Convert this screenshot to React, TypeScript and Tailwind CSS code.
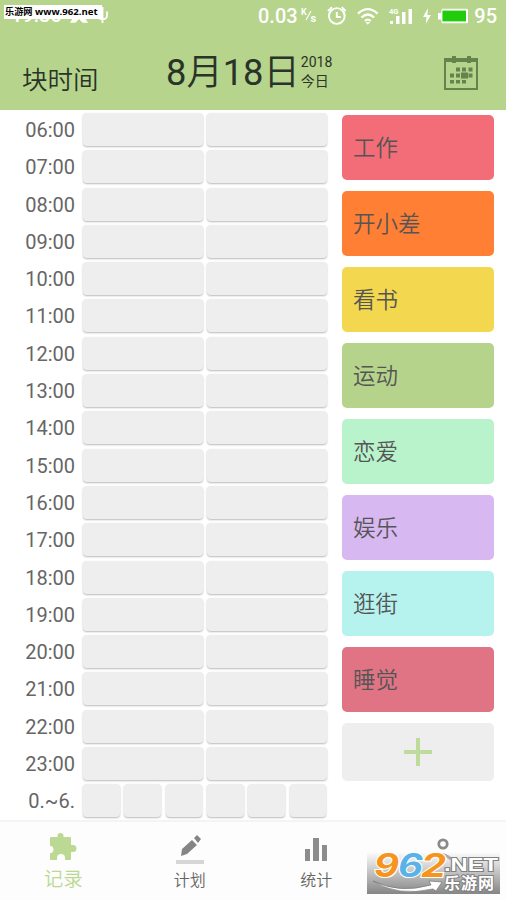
import { clsx } from 'clsx';

interface Category {
  name: string;
  color: string;
}

const hours = Array.from({ length: 18 }, (_, i) => `${String(i + 6).padStart(2, '0')}:00`);

const categories: Category[] = [
  { name: '工作', color: 'bg-[#f36d78]' },
  { name: '开小差', color: 'bg-[#ff7f35]' },
  { name: '看书', color: 'bg-[#f3d74f]' },
  { name: '运动', color: 'bg-[#b5d38a]' },
  { name: '恋爱', color: 'bg-[#b8f3cb]' },
  { name: '娱乐', color: 'bg-[#d7b8f0]' },
  { name: '逛街', color: 'bg-[#b6f3ee]' },
  { name: '睡觉', color: 'bg-[#e17484]' },
];

function StatusBar() {
  return (
    <div className="relative h-8 text-white">
      {/* Clock, half hidden by the site label */}
      <div className="absolute left-[11px] top-[3px] flex items-center text-[20px] leading-6 font-medium">
        <span>19:30</span>
        <svg className="ml-2 h-[18px] w-[18px]" viewBox="0 0 20 19" fill="currentColor">
          <path d="M10 2 20 18h-6l-4-4-4 4H0z" />
        </svg>
        <svg className="ml-[8px] h-[18px] w-[13px]" viewBox="0 0 14 20" fill="none" stroke="currentColor" strokeWidth="2">
          <path d="M7 1v18M2 6v5q0 3 5 4 5-1 5-4V6" />
        </svg>
      </div>
      <div className="absolute left-[4px] top-[5px] h-[14px] w-[98px] whitespace-nowrap bg-white pl-px font-['Open_Sans','Noto_Sans_CJK_SC',sans-serif] text-[9.2px] leading-[14px] font-bold text-black">
        乐游网 <span className="text-[9.6px]">www.962.net</span>
      </div>

      <div className="flex h-8 items-center pl-[258px] pr-[9px]">
        <span className="w-[40px] text-[20px] leading-none font-medium">0.03</span>
        <svg className="ml-[3px] h-[16px] w-[18px] overflow-visible" viewBox="0 0 18 16" fill="currentColor">
          <text x="0" y="7" fontSize="9" fontWeight="700">K</text>
          <path d="M5 12 10 3" stroke="currentColor" strokeWidth="1.2" />
          <text x="9.500" y="14" fontSize="11" fontWeight="700">s</text>
        </svg>
        <svg className="ml-[8px] h-[20px] w-[20px]" viewBox="0 0 20 20" fill="none" stroke="currentColor" strokeWidth="2">
          <circle cx="10" cy="10" r="8" />
          <path d="M1 5l4-4M19 5l-4-4M10 6v5h4" />
        </svg>
        <svg className="ml-[11px] h-[18px] w-[22px]" viewBox="0 0 22 18" fill="none" stroke="currentColor" strokeWidth="2.3">
          <path d="M1 6.5Q11-2.5 21 6.5M4.5 10.5q6.5-6 13 0M8 14q3-2.5 6 0" />
          <path d="m8.5 15 2.5 3 2.5-3z" fill="currentColor" stroke="none" />
        </svg>
        <svg className="ml-[10px] h-[18px] w-[24px] overflow-visible" viewBox="0 0 24 18" fill="currentColor">
          <text x="0" y="6.5" fontSize="7.5" fontWeight="700">4G</text>
          <path d="M1 14h3v3H1zM7 9h3.500v8H7zM13 5h3.500v12H13zM19.500 2H23v15h-3.500z" />
        </svg>
        <svg className="ml-[10px] h-[16px] w-[8px]" viewBox="0 0 8 16" fill="currentColor">
          <path d="M5 0 0 9h3.500L3 16l5-9H4.500z" />
        </svg>
        <svg className="ml-[6px] h-[16px] w-[32px]" viewBox="0 0 32 16">
          <path d="M5 .5h25a1.500 1.500 0 0 1 1.500 1.500v12a1.500 1.500 0 0 1-1.500 1.500H5l-1-4H1V5h3z" fill="#fff" />
          <path d="M5.500 2.500h24v11h-24z" fill="#20cc0c" />
        </svg>
        <span className="ml-[6px] text-[20px] leading-none font-medium">95</span>
      </div>
    </div>
  );
}

function CalendarIcon() {
  return (
    <svg className="h-[36px] w-[36px]" viewBox="0 0 36 36" fill="#65844d">
      <path d="M1 3h34v32H1zM3 7v26h30V7z" fillRule="evenodd" />
      <path d="M9 1h4v7H9zM24 1h4v7h-4z" />
      <path d="M13 12.500h4v4h-4zM19 12.500h4v4h-4zM25.500 12.500h4v4h-4zM7 18.500h4v4H7zM13 18.500h4v4h-4zM18 17.500h7v6h-7zM25.500 18.500h4v4h-4zM7 25h4v3.500H7zM13 25h4v3.500h-4zM19 25h4v3.500h-4z" />
    </svg>
  );
}

function Header() {
  return (
    <header className="h-[110px] shrink-0 bg-[#b6d48b]">
      <StatusBar />
      <div className="flex h-[78px] text-[#29332a]">
        <h1 className="w-[166px] pl-[22px] pt-[30px] text-[25.500px] leading-9 font-[350]">块时间</h1>
        <div className="pt-[16px] text-[36.300px] leading-[50px] whitespace-nowrap">
          8<span className="font-[350]">月</span>18<span className="font-[350]">日</span>
        </div>
        <div className="ml-[1px] pt-[21px] text-[14px] leading-[19px]">
          <div>2018</div>
          <div>今日</div>
        </div>
        <div className="ml-auto pr-[27px] pt-[23px]">
          <CalendarIcon />
        </div>
      </div>
    </header>
  );
}

function Slot() {
  return <div className="h-[33px] flex-1 rounded-[4px] bg-[#eee] shadow-[0_1px_2px_rgba(0,0,0,0.28)]" />;
}

function Timeline() {
  return (
    <div className="flex w-[328px] flex-col gap-[4.300px] pt-[3px]">
      {[...hours, '0.~6.'].map((label, row) => (
        <div key={label} className="flex h-[33px] items-center">
          <span className="w-[75px] pt-px text-right text-[20px] text-[#666]">{label}</span>
          <div className="ml-2 flex flex-1 gap-[4.500px] pr-[1.500px]">
            {Array.from({ length: row === hours.length ? 6 : 2 }, (_, i) => (
              <Slot key={i} />
            ))}
          </div>
        </div>
      ))}
    </div>
  );
}

function Categories() {
  return (
    <div className="ml-[14px] flex w-[152px] flex-col gap-[11px] pt-[5px]">
      {categories.map((category) => (
        <button
          key={category.name}
          className={clsx('h-[65px] rounded-[5px] pt-[2px] pl-[11px] text-left text-[22.500px] font-[350] text-[#555]', category.color)}
        >
          {category.name}
        </button>
      ))}
      <button className="flex h-[58px] items-center justify-center rounded-[5px] bg-[#eee]">
        <svg className="h-7 w-7" viewBox="0 0 28 28" stroke="#bfdb9b" strokeWidth="4">
          <path d="M14 0v28M0 14h28" />
        </svg>
      </button>
    </div>
  );
}

function Watermark() {
  return (
    <svg className="absolute left-[17px] top-[30px] h-[42px] w-[133px] overflow-visible" viewBox="0 0 133 42">
      <defs>
        <linearGradient id="shade" x1="0" y1="0" x2="0" y2="1">
          <stop offset="0" stopColor="#fdfdfd" />
          <stop offset="1" stopColor="#858585" />
        </linearGradient>
      </defs>
      <rect width="133" height="42" fill="url(#shade)" />
      <path d="M67 4q9-4 17 3" fill="none" stroke="#aaa" strokeWidth="3" />
      <path d="M6 29q26 13 58 4l-2-4 13 1-6 9-3-2Q30 45 6 29z" fill="#fff" stroke="#777" strokeWidth="0.7" />
      <g fontStyle="italic" fontWeight="700" fontSize="32" stroke="#fff" strokeWidth="2" paintOrder="stroke" fontFamily="Inter, sans-serif">
        <text x="7" y="25" fill="#f7941d" textLength="25" lengthAdjust="spacingAndGlyphs">9</text>
        <text x="31" y="25" fill="#59b2e8" textLength="25" lengthAdjust="spacingAndGlyphs">6</text>
        <text x="54" y="25" fill="#f7941d" textLength="25" lengthAdjust="spacingAndGlyphs">2</text>
      </g>
      <g fill="#fff" stroke="#808080" strokeWidth="2" paintOrder="stroke" fontWeight="700" fontFamily="'Liberation Sans','Noto Sans CJK SC',sans-serif">
        <text x="77" y="19" fontSize="19" textLength="54" lengthAdjust="spacingAndGlyphs">.NET</text>
        <text x="77" y="37" fontSize="16" textLength="50">乐游网</text>
      </g>
    </svg>
  );
}

function BottomNav() {
  return (
    <nav className="relative z-10 grid h-[80px] shrink-0 grid-cols-4 border-t-2 border-[#f4f4f4] bg-[#fdfdfd] text-[#666]">
      <div className="flex flex-col items-center pt-[11px] text-[#bcd993]">
        <svg className="h-[27px] w-[28px]" viewBox="0 0 28 27" fill="currentColor">
          <path d="M2 4h6.500V3a3 3 0 0 1 6 0v1H21q1 0 1 1v7h2a3.500 3.500 0 0 1 0 7h-2v7q0 1-1 1h-5v-2a4 4 0 0 0-8 0v2H2q-1 0-1-1v-6h1.500a4 4 0 0 0 0-7H1V5q0-1 1-1z" />
        </svg>
        <span className="mt-[6px] text-[19.500px] leading-7 font-[350]">记录</span>
      </div>
      <div className="flex flex-col items-center pt-[12px]">
        <svg className="h-[30px] w-[28px]" viewBox="0 0 28 30" fill="#858585">
          <path d="M6 15 16 6l5 5L11 20l-6 2zM18 4l3-3 4 4-3 4z" />
          <path d="M0 26h28v4H0z" fill="#d6d6d6" />
        </svg>
        <span className="mt-[5px] text-[16px] leading-6 font-[350]">计划</span>
      </div>
      <div className="flex flex-col items-center pt-[14px]">
        <svg className="h-[28px] w-[24px]" viewBox="0 0 24 28" fill="#8c8c8c">
          <path d="M1 13h5v12H1zM9 2h6v23H9zM18 9h5v16h-5z" />
        </svg>
        <span className="mt-[5px] text-[16px] leading-6 font-[350]">统计</span>
      </div>
      <div className="relative -ml-[30px]">
        <Watermark />
        <svg className="absolute left-[77px] top-[15px] h-[14px] w-[32px]" viewBox="0 0 32 14" fill="none" stroke="#8a8a8a">
          <circle cx="16" cy="7" r="4.200" strokeWidth="2.800" />
        </svg>
      </div>
    </nav>
  );
}

export default function App() {
  return (
    <div className="flex h-[900px] w-[506px] flex-col overflow-hidden bg-white font-[Roboto,'Noto_Sans_CJK_SC',sans-serif]">
      <Header />
      <main className="flex h-[710px] shrink-0">
        <Timeline />
        <Categories />
      </main>
      <BottomNav />
    </div>
  );
}
